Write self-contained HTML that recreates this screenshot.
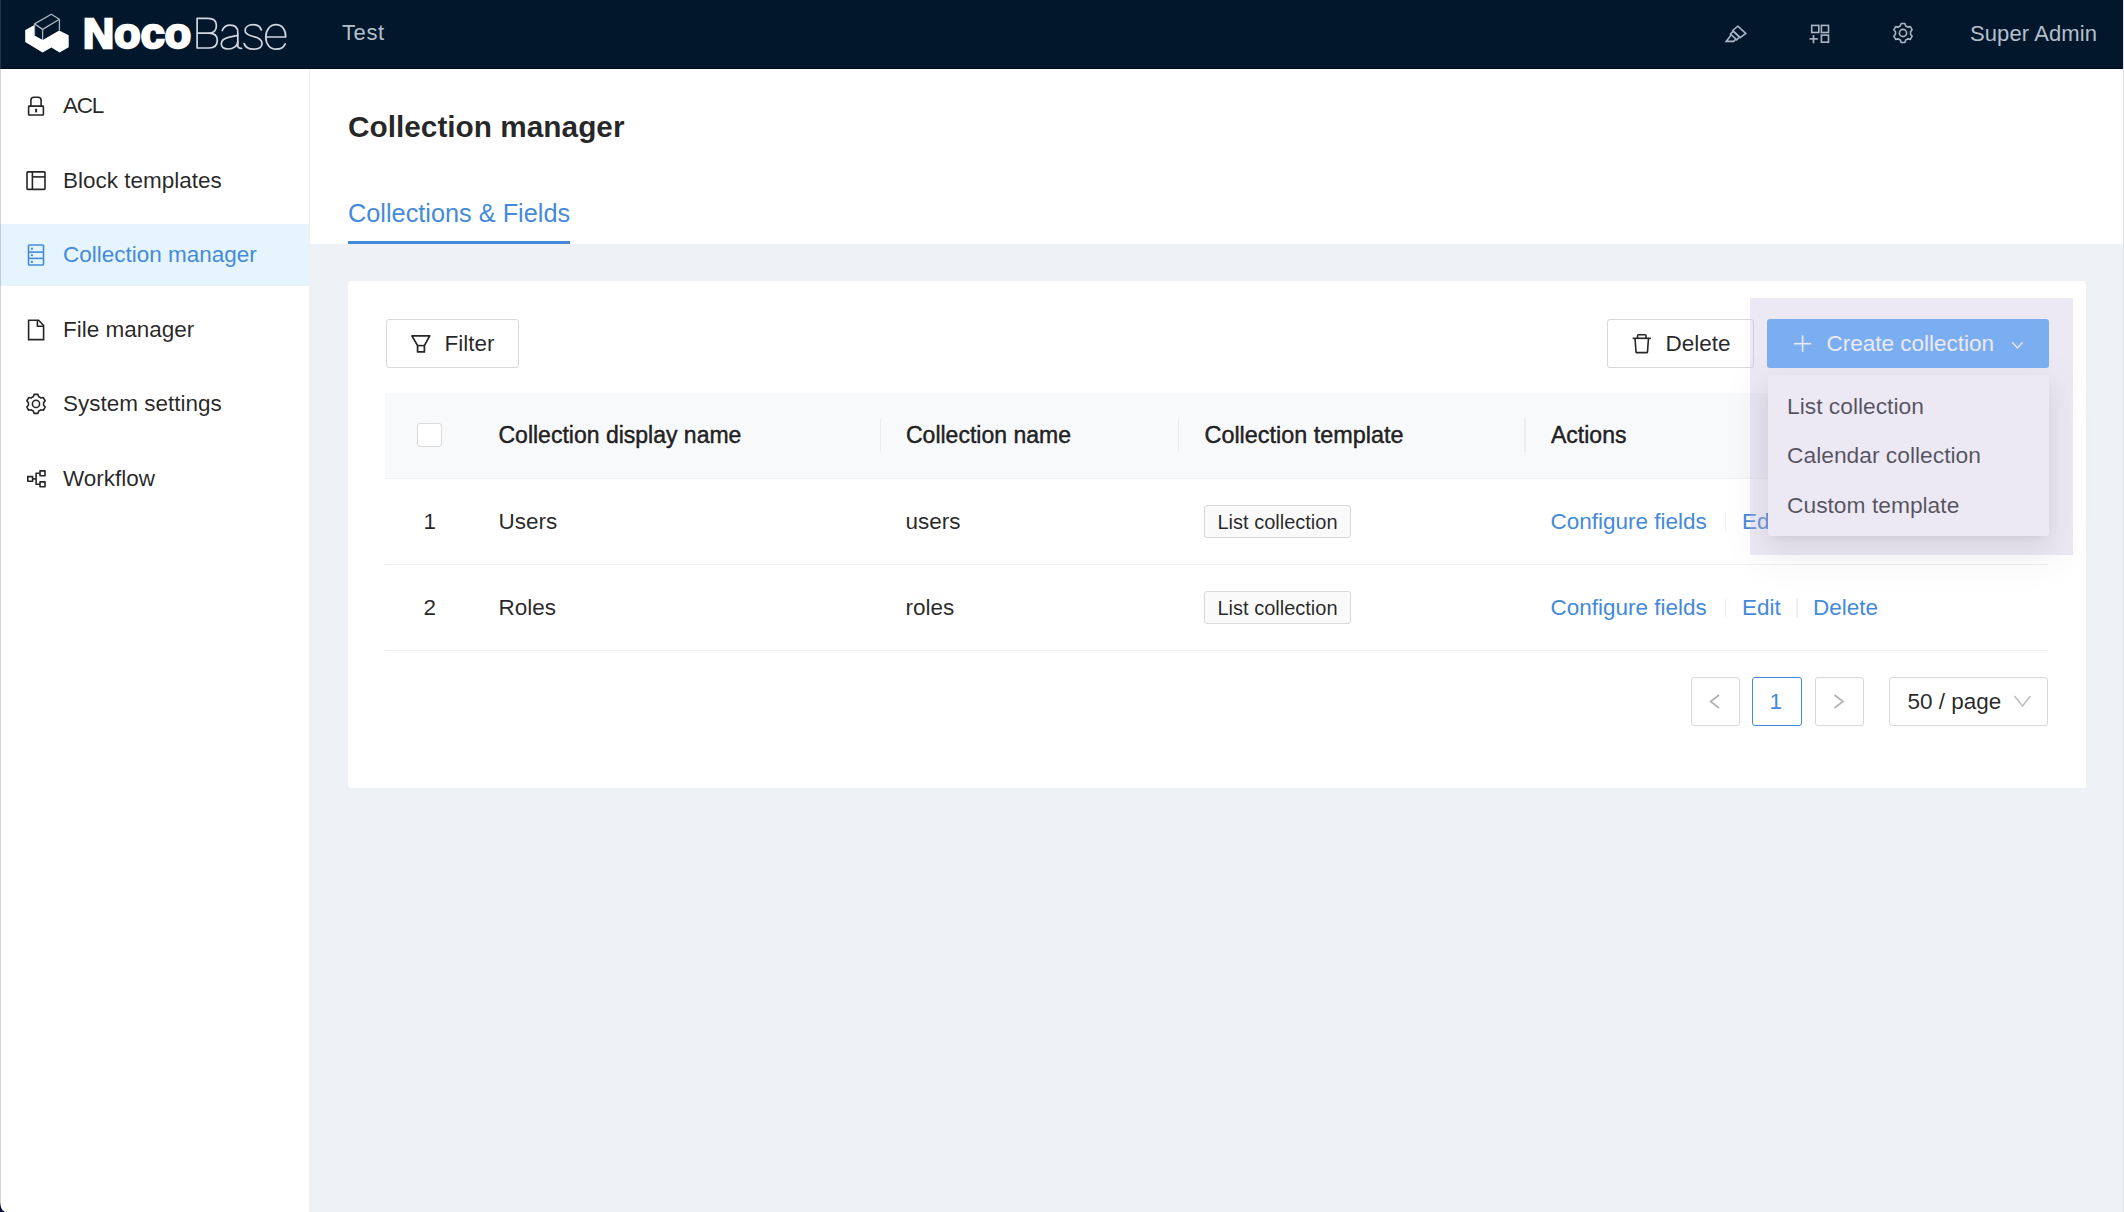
<!DOCTYPE html>
<html><head><meta charset="utf-8">
<style>
html,body{margin:0;padding:0;}
body{width:2124px;height:1212px;overflow:hidden;position:relative;background:#eef1f5;font-family:"Liberation Sans",sans-serif;color:rgba(0,0,0,0.85);}
.a{position:absolute;}
.t{position:absolute;white-space:nowrap;line-height:1;}
svg{position:absolute;overflow:visible;}
#hdr{left:0;top:0;width:2123px;height:69px;background:#02172c;}
#side{left:0;top:69px;width:309px;height:1143px;background:#fff;border-right:1px solid #f0f0f0;}
#ph{left:310px;top:69px;width:1814px;height:175px;background:#fff;}
#card{left:348px;top:281px;width:1738px;height:507px;background:#fff;border-radius:3px;}
.btn{position:absolute;box-sizing:border-box;border:1.5px solid #d9d9d9;border-radius:3px;background:#fff;}
.th{background:#f8f9fb;}
.link{color:#458ad9;}
</style></head><body>

<!-- HEADER -->
<div id="hdr" class="a">
  <svg style="left:0;top:0" width="80" height="69">
    <polygon points="25.2,30 25.2,42.1 42.6,52.4 51.3,47.6 59.6,52.4 68.7,47.2 68.7,35.3 59.2,30.4 42.8,40.1 34.5,35.5 34.5,24.9" fill="#fff"/>
    <g stroke="#aab4c3" stroke-width="1.3" fill="none" stroke-linejoin="round">
      <polyline points="34.5,23.9 51.3,14.2 59.4,19.3 42.6,29.4 34.5,23.9 34.5,35.5"/>
      <line x1="42.6" y1="29.4" x2="42.6" y2="40.1"/>
      <line x1="59.4" y1="19.3" x2="59.4" y2="30.4"/>
    </g>
  </svg>
  <div class="t" style="left:83px;top:12.3px;font-size:43px;font-weight:bold;color:#fff;letter-spacing:0.2px;-webkit-text-stroke:2.6px #fff">Noco</div>
  <svg style="left:0;top:0" width="1" height="1"><g stroke="#d2d8e2" stroke-width="1.7" fill="none" stroke-linecap="round" stroke-linejoin="round">
    <path d="M197.1 18.4 V48 H209 C214.2 48 217.3 45.3 217.3 40.6 C217.3 35.9 214.2 33.2 209 33.2 H197.1 M197.1 18.4 H208 C213.2 18.4 216.4 20.9 216.4 25.7 C216.4 30.5 213.2 33.2 208 33.2"/>
    <path d="M222.3 30.5 C223.6 27 226.5 25.2 230.2 25.2 C235 25.2 237.8 28 237.8 32.6 V45.4 C237.8 47.6 238.9 48.3 241.6 48.3"/>
    <path d="M237.8 35.3 L229.3 37.1 C224.2 38.2 221.3 40.5 221.3 43.8 C221.3 47.1 224 49 228.2 49 C233.3 49 237.8 46 237.8 41.4"/>
    <path d="M261.3 29.9 C260.1 26.6 257.2 24.7 253.2 24.7 C248.2 24.7 245.1 27.1 245.1 30.5 C245.1 34 248.2 35.3 253.3 36.5 C258.6 37.7 262 39.6 262 43.5 C262 47.1 258.6 49.1 253.5 49.1 C248.5 49.1 245.3 47 244.1 43.6"/>
    <path d="M266.1 37 H285.7 C285.7 29.5 282 24.7 276 24.7 C269.9 24.7 265.8 29.9 265.8 37 C265.8 44 269.9 49.2 276 49.2 C280.4 49.2 283.8 47.1 285.2 43.8"/>
  </g></svg>
  <div class="t" style="left:342px;top:22.4px;font-size:22px;color:#b4bfcc;letter-spacing:0.6px">Test</div>
  <!-- highlighter -->
  <svg style="left:1722px;top:22px" width="32" height="28">
    <g stroke="#aab4c3" stroke-width="1.6" fill="none" stroke-linejoin="miter">
      <polygon points="15.8,4.2 23.8,11.4 18.1,15.6 10.7,8.5"/>
      <polygon points="11.3,9.1 17.5,15.0 14.7,17.9 8.5,12.0"/>
      <polyline points="9.3,12.8 4.2,19.4 11.6,19.4 13.9,17.2"/>
    </g>
  </svg>
  <!-- appstore add -->
  <svg style="left:1804px;top:20px" width="32" height="28">
    <g stroke="#aab4c3" stroke-width="1.6" fill="none">
      <rect x="7.7" y="5.4" width="7.1" height="7.1"/>
      <rect x="17.4" y="5.4" width="7.1" height="7.1"/>
      <rect x="17.4" y="15.1" width="7.1" height="7.1"/>
      <line x1="5.5" y1="18.9" x2="13.9" y2="18.9"/>
      <line x1="9.5" y1="15" x2="9.5" y2="23.3"/>
    </g>
  </svg>
  <!-- setting -->
  <svg style="left:1903.4px;top:33.4px" width="1" height="1">
    <g stroke="#aab4c3" stroke-width="1.6" fill="none" stroke-linejoin="round">
      <path d="M2.72 -7.10 L1.85 -9.52 L-1.85 -9.52 L-2.72 -7.10 A7.60 7.60 0 0 0 -4.78 -5.91 L-7.32 -6.36 L-9.17 -3.16 L-7.51 -1.19 A7.60 7.60 0 0 0 -7.51 1.19 L-9.17 3.16 L-7.32 6.36 L-4.78 5.91 A7.60 7.60 0 0 0 -2.72 7.10 L-1.85 9.52 L1.85 9.52 L2.72 7.10 A7.60 7.60 0 0 0 4.78 5.91 L7.32 6.36 L9.17 3.16 L7.51 1.19 A7.60 7.60 0 0 0 7.51 -1.19 L9.17 -3.16 L7.32 -6.36 L4.78 -5.91 A7.60 7.60 0 0 0 2.72 -7.10 Z"/>
      <circle cx="0" cy="0" r="3.6"/>
    </g>
  </svg>
  <div class="t" style="left:1970px;top:22.5px;font-size:22px;color:#b4bfcc;letter-spacing:0.1px">Super Admin</div>
</div>

<!-- SIDEBAR -->
<div id="side" class="a"></div>
<div class="a" style="left:0;top:224px;width:309px;height:62px;background:#e6f5fd"></div>
<svg style="left:0;top:0" width="60" height="500">
  <g stroke="#262626" stroke-width="1.6" fill="none">
    <!-- lock -->
    <rect x="28.6" y="106.1" width="14.8" height="8.9" rx="0.6"/>
    <path d="M30.9 106.1 V100.4 Q30.9 97.3 34 97.3 H38 Q41.1 97.3 41.1 100.4 V106.1"/>
    <line x1="36.1" y1="108.8" x2="36.1" y2="112.4" stroke-width="2"/>
    <!-- block templates -->
    <rect x="27" y="171.9" width="18" height="17.5" rx="0.8"/>
    <line x1="32.4" y1="171.9" x2="32.4" y2="189.4"/>
    <line x1="32.4" y1="176.9" x2="45" y2="176.9"/>
    <!-- file -->
    <path d="M28.6 320.2 H38.6 L43.6 325.5 V339.6 H28.6 Z"/>
    <path d="M37.4 320.2 V326.2 H43.6"/>
  </g>
  <g stroke="#458ad9" stroke-width="1.6" fill="none">
    <rect x="28.5" y="245" width="15" height="20" rx="0.8"/>
    <line x1="28.5" y1="252.1" x2="43.5" y2="252.1"/>
    <line x1="28.5" y1="258.4" x2="43.5" y2="258.4"/>
  </g>
  <g fill="#458ad9">
    <rect x="30.9" y="247.7" width="2" height="2"/>
    <rect x="30.9" y="254.2" width="2" height="2"/>
    <rect x="30.9" y="260.9" width="2" height="2"/>
  </g>
  <g stroke="#262626" stroke-width="1.6" fill="none" stroke-linejoin="round">
    <g transform="translate(36 403.9)">
      <path d="M2.72 -7.10 L1.85 -9.52 L-1.85 -9.52 L-2.72 -7.10 A7.60 7.60 0 0 0 -4.78 -5.91 L-7.32 -6.36 L-9.17 -3.16 L-7.51 -1.19 A7.60 7.60 0 0 0 -7.51 1.19 L-9.17 3.16 L-7.32 6.36 L-4.78 5.91 A7.60 7.60 0 0 0 -2.72 7.10 L-1.85 9.52 L1.85 9.52 L2.72 7.10 A7.60 7.60 0 0 0 4.78 5.91 L7.32 6.36 L9.17 3.16 L7.51 1.19 A7.60 7.60 0 0 0 7.51 -1.19 L9.17 -3.16 L7.32 -6.36 L4.78 -5.91 A7.60 7.60 0 0 0 2.72 -7.10 Z"/>
      <circle cx="0" cy="0" r="3.6"/>
    </g>
    <!-- workflow -->
    <rect x="27.8" y="476.6" width="4.8" height="4.6"/>
    <rect x="40" y="470.9" width="5" height="4.8"/>
    <rect x="40" y="481.9" width="5" height="4.8"/>
    <polyline points="32.6,478.9 36.1,478.9"/>
    <polyline points="40,473.3 36.1,473.3 36.1,484.3 40,484.3"/>
  </g>
</svg>
<div class="t" style="left:63px;top:95px;font-size:22.5px;letter-spacing:-1.3px">ACL</div>
<div class="t" style="left:63px;top:169.5px;font-size:22.5px">Block templates</div>
<div class="t link" style="left:63px;top:244px;font-size:22.5px">Collection manager</div>
<div class="t" style="left:63px;top:318.5px;font-size:22.5px">File manager</div>
<div class="t" style="left:63px;top:393px;font-size:22.5px">System settings</div>
<div class="t" style="left:63px;top:467.5px;font-size:22.5px">Workflow</div>

<!-- PAGE HEADER -->
<div id="ph" class="a"></div>
<div class="t" style="left:348px;top:111.5px;font-size:29.8px;font-weight:bold;color:rgba(0,0,0,0.85)">Collection manager</div>
<div class="t link" style="left:348px;top:201px;font-size:25.3px">Collections &amp; Fields</div>
<div class="a" style="left:348px;top:241px;width:222px;height:3px;background:#458ad9"></div>

<!-- CARD -->
<div id="card" class="a"></div>
<div class="btn" style="left:385.5px;top:319px;width:133.5px;height:49px"></div>
<svg style="left:0;top:0" width="1" height="1">
  <g stroke="#262626" stroke-width="1.6" fill="none" stroke-linejoin="round">
    <path d="M411.9 335.9 H429.7 L424.4 345.6 V351.9 H417.6 V345.6 Z" stroke-width="1.75"/>
    <line x1="417.6" y1="345.6" x2="424.4" y2="345.6"/>
  </g>
</svg>
<div class="t" style="left:444.5px;top:332.5px;font-size:22.5px">Filter</div>

<!-- table header -->
<div class="a th" style="left:385px;top:393px;width:1663px;height:84.5px"></div>
<div class="a" style="left:385px;top:477.5px;width:1663px;height:1.5px;background:#f0f0f0"></div>
<div class="a" style="left:385px;top:563.5px;width:1663px;height:1.5px;background:#f0f0f0"></div>
<div class="a" style="left:385px;top:649.5px;width:1663px;height:1.5px;background:#f0f0f0"></div>
<div class="a" style="left:417px;top:423px;width:24.5px;height:24px;box-sizing:border-box;border:1.5px solid #d9d9d9;border-radius:3px;background:#fff"></div>
<div class="a" style="left:879.5px;top:419px;width:1.5px;height:33px;background:#ececec"></div>
<div class="a" style="left:1177.5px;top:419px;width:1.5px;height:33px;background:#ececec"></div>
<div class="a" style="left:1524px;top:419px;width:1.5px;height:33px;background:#ececec"></div>
<div class="t" style="left:498.5px;top:423.5px;font-size:23px;-webkit-text-stroke:0.5px rgba(0,0,0,0.85)">Collection display name</div>
<div class="t" style="left:906px;top:423.5px;font-size:23px;-webkit-text-stroke:0.5px rgba(0,0,0,0.85)">Collection name</div>
<div class="t" style="left:1204.5px;top:423.5px;font-size:23.4px;-webkit-text-stroke:0.5px rgba(0,0,0,0.85)">Collection template</div>
<div class="t" style="left:1551px;top:423.5px;font-size:23px;-webkit-text-stroke:0.5px rgba(0,0,0,0.85)">Actions</div>

<!-- rows -->
<div class="t" style="left:423.5px;top:510.5px;font-size:22.5px">1</div>
<div class="t" style="left:498.5px;top:510.5px;font-size:22.5px">Users</div>
<div class="t" style="left:905.5px;top:510.5px;font-size:22.5px">users</div>
<div class="a" style="left:1204px;top:505px;width:146.5px;height:33px;box-sizing:border-box;border:1.5px solid #d9d9d9;border-radius:3px;background:#fafafa"></div>
<div class="t" style="left:1217.5px;top:511.5px;font-size:20px">List collection</div>
<div class="t link" style="left:1550.5px;top:510.5px;font-size:22.5px">Configure fields</div>
<div class="a" style="left:1724.5px;top:511.5px;width:1.5px;height:20px;background:#f0f0f0"></div>
<div class="t link" style="left:1742px;top:510.5px;font-size:22.5px">Edit</div>
<div class="a" style="left:1796px;top:511.5px;width:1.5px;height:20px;background:#f0f0f0"></div>
<div class="t link" style="left:1813px;top:510.5px;font-size:22.5px">Delete</div>

<div class="t" style="left:423.5px;top:596.5px;font-size:22.5px">2</div>
<div class="t" style="left:498.5px;top:596.5px;font-size:22.5px">Roles</div>
<div class="t" style="left:905.5px;top:596.5px;font-size:22.5px">roles</div>
<div class="a" style="left:1204px;top:591px;width:146.5px;height:33px;box-sizing:border-box;border:1.5px solid #d9d9d9;border-radius:3px;background:#fafafa"></div>
<div class="t" style="left:1217.5px;top:597.5px;font-size:20px">List collection</div>
<div class="t link" style="left:1550.5px;top:596.5px;font-size:22.5px">Configure fields</div>
<div class="a" style="left:1724.5px;top:597.5px;width:1.5px;height:20px;background:#f0f0f0"></div>
<div class="t link" style="left:1742px;top:596.5px;font-size:22.5px">Edit</div>
<div class="a" style="left:1796px;top:597.5px;width:1.5px;height:20px;background:#f0f0f0"></div>
<div class="t link" style="left:1813px;top:596.5px;font-size:22.5px">Delete</div>

<!-- pagination -->
<div class="btn" style="left:1690.5px;top:677px;width:49px;height:49px"></div>
<div class="btn" style="left:1752px;top:677px;width:49.5px;height:49px;border-color:#458ad9"></div>
<div class="btn" style="left:1814.5px;top:677px;width:49px;height:49px"></div>
<div class="btn" style="left:1889px;top:677px;width:159px;height:49px"></div>
<svg style="left:0;top:0" width="1" height="1">
  <g stroke="#b0b0b0" stroke-width="1.6" fill="none">
    <polyline points="1719,695 1710.5,701.5 1719,708"/>
    <polyline points="1834.5,695 1843,701.5 1834.5,708"/>
  </g>
  <polyline points="2014.5,696 2022.5,706 2030.5,696" stroke="#bfbfbf" stroke-width="1.6" fill="none"/>
</svg>
<div class="t link" style="left:1769.5px;top:691px;font-size:22.5px">1</div>
<div class="t" style="left:1907.5px;top:691px;font-size:22.5px">50 / page</div>

<!-- Delete button -->
<div class="btn" style="left:1607px;top:319px;width:147px;height:49px"></div>
<svg style="left:0;top:0" width="1" height="1">
  <g stroke="#262626" stroke-width="1.6" fill="none" stroke-linejoin="round">
    <path d="M1632.6 338.3 H1650.9"/>
    <path d="M1637.6 338.3 V335.6 Q1637.6 334.8 1638.4 334.8 H1645.2 Q1646 334.8 1646 335.6 V338.3"/>
    <path d="M1635 338.3 L1636 351.8 Q1636.1 352.6 1636.9 352.6 H1646.6 Q1647.4 352.6 1647.5 351.8 L1648.5 338.3"/>
  </g>
</svg>
<div class="t" style="left:1665.5px;top:332.5px;font-size:22.5px">Delete</div>

<!-- dropdown (under overlay) -->
<div class="a" style="left:1767.5px;top:374.5px;width:281px;height:161.5px;background:#fff;border-radius:3px;box-shadow:0 4.5px 9px -6px rgba(0,0,0,.12),0 9px 24px 0 rgba(0,0,0,.08),0 13.5px 42px 12px rgba(0,0,0,.05)"></div>
<div class="t" style="left:1787px;top:394.5px;font-size:22.8px">List collection</div>
<div class="t" style="left:1787px;top:444px;font-size:22.8px">Calendar collection</div>
<div class="t" style="left:1787px;top:493.5px;font-size:22.8px">Custom template</div>

<!-- Create collection button -->
<div class="a" style="left:1767px;top:319px;width:281.5px;height:49px;background:#5cabf8;border-radius:3px"></div>
<svg style="left:0;top:0" width="1" height="1">
  <g stroke="#fff" stroke-width="1.6" fill="none">
    <line x1="1794" y1="343.7" x2="1811.2" y2="343.7"/>
    <line x1="1802.6" y1="335.2" x2="1802.6" y2="352"/>
    <polyline points="2012.3,342.3 2017.45,348 2022.6,342.3" stroke-width="1.4"/>
  </g>
</svg>
<div class="t" style="left:1826.5px;top:333px;font-size:22.5px;color:#fff">Create collection</div>

<!-- overlay -->
<div class="a" style="left:1750px;top:298px;width:323px;height:257px;background:rgba(192,182,222,0.3)"></div>

<!-- window edges -->
<div class="a" style="left:0;top:68px;width:2123px;height:1px;background:#000c18"></div>
<div class="a" style="left:0;top:0;width:1px;height:1212px;background:rgba(110,115,130,0.3)"></div>
<div class="a" style="left:2123px;top:0;width:1px;height:1212px;background:#e3e3e7"></div>
<svg style="left:0;top:0" width="1" height="1"><path d="M0 1202 C0.5 1208 2.5 1211.5 6 1212 L0 1212 Z" fill="#0b0b40"/></svg>
</body></html>
